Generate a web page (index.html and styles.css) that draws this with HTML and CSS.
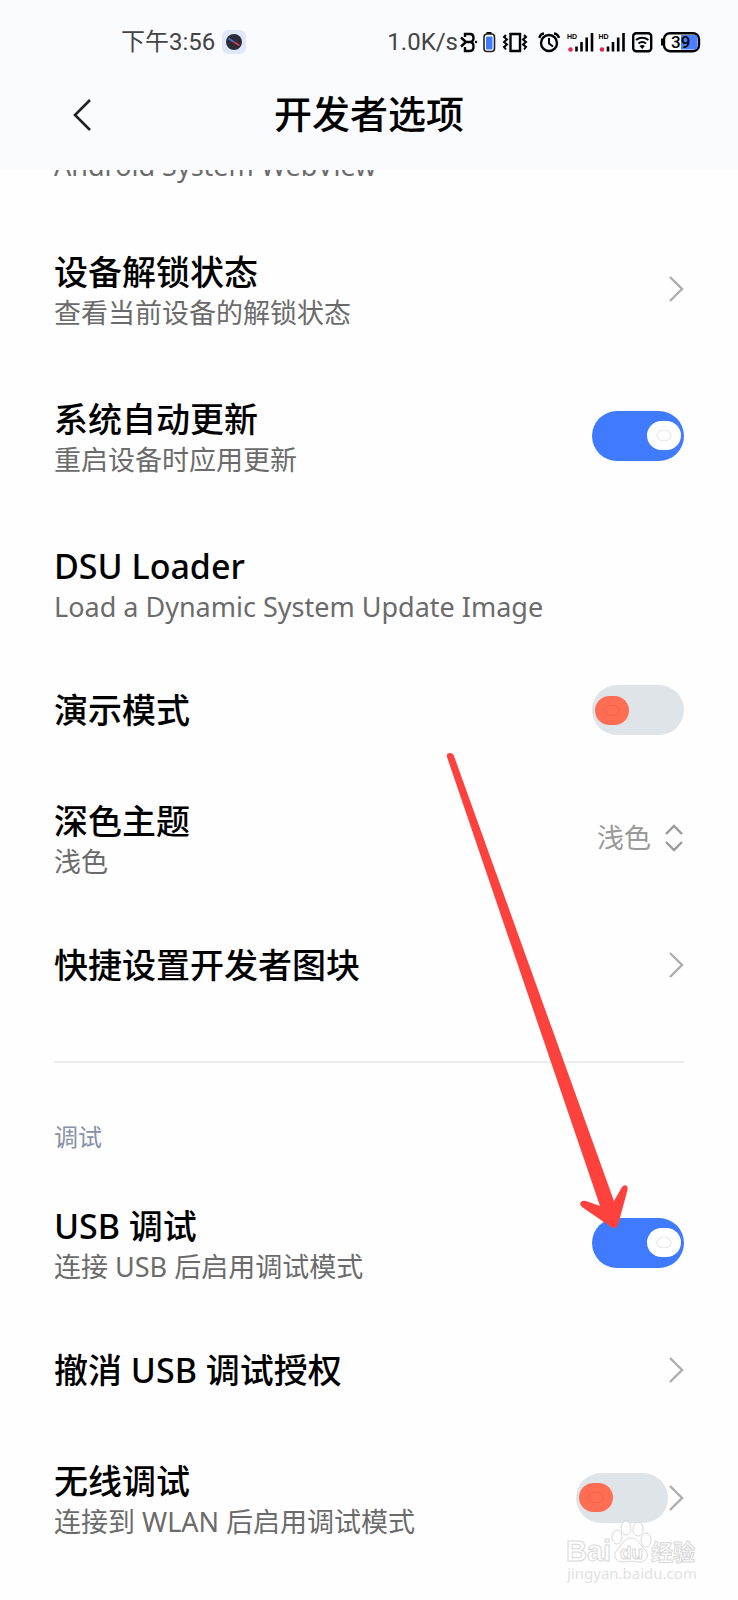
FILE: index.html
```html
<!DOCTYPE html>
<html lang="zh-CN">
<head>
<meta charset="utf-8">
<meta name="viewport" content="width=device-width, initial-scale=1">
<title>开发者选项</title>
<link rel="stylesheet" href="styles.css">
</head>
<body>
<svg class="defs" aria-hidden="true">
  <symbol id="chevron" viewBox="0 0 16 28"><path d="M2 2 14 14 2 26" fill="none" stroke="#adadad" stroke-width="2.4"/></symbol>
</svg>
<div class="screen">
  <header class="top">
    <div class="status">
      <div class="status-side">
        <span class="clock">下午3:56</span>
        <svg class="app-badge" viewBox="0 0 24 24" aria-hidden="true">
          <rect width="24" height="24" rx="6" fill="#dfe7fa"/>
          <circle cx="12" cy="12" r="8" fill="#2b2c36"/>
          <path d="M6.500 8.500 12 12" stroke="#4a6fd0" stroke-width="1.500"/>
          <path d="M12 12 17.500 15.500" stroke="#e0394f" stroke-width="1.500"/>
        </svg>
      </div>
      <div class="status-side">
        <span class="speed">1.0K/s</span>
        <svg class="status-icons" viewBox="0 0 244 24" aria-hidden="true">
          <g fill="none" stroke="#000" stroke-width="2.400">
            <path d="M3 7.500 8 12 3 16.500M7 7V4h5q3.500 0 3.500 4 0 4-3.500 4 3.500 0 3.500 4.500 0 4.500-3.500 4.500H7v-4M6 12h7"/>
            <path d="M52.500 4h9.500v17h-9.500z"/>
            <path stroke-width="2" d="M48 5l-2 2 3 2.500-3 2.500 3 2.500-3 2.500 2 2.500M66 5l2 2-3 2.500 3 2.500-3 2.500 3 2.500-2 2.500"/>
            <circle cx="91" cy="13" r="8"/>
            <path d="M91 8v5.500l4 3" stroke-width="2"/>
            <path d="M81.500 8Q82 4 86 3.500M96 3.500Q100 4 101 8"/>
            <rect x="175.200" y="3.200" width="18" height="18" rx="3"/>
          </g>
          <circle cx="18" cy="12" r="1.200" fill="#000"/>
          <path d="M28.500 2h5v2h-5z"/>
          <rect x="26" y="4" width="10.500" height="17.500" rx="3" fill="#fff" stroke="#222" stroke-width="1.600"/>
          <rect x="28" y="6.500" width="6.500" height="13" rx="1" fill="#3f7bfb"/>
          <g class="signal">
            <circle cx="112.500" cy="19.500" r="2.300" fill="#e8274f"/>
            <path d="M118.500 21.500v-5M123.500 21.500V12M128.700 21.500V7.500M134 21.500V3" stroke="#000" stroke-width="2.600"/>
            <text x="109" y="9">HD</text>
          </g>
          <g class="signal">
            <circle cx="144" cy="19.500" r="2.300" fill="#e8274f"/>
            <path d="M150 21.500v-5M155 21.500V12M160.200 21.500V7.500M165.500 21.500V3" stroke="#000" stroke-width="2.600"/>
            <text x="140.500" y="9">HD</text>
          </g>
          <path d="M178 10Q184 5.500 190.500 10M180.500 13.500Q184.200 10.500 188 13.500" fill="none" stroke="#000" stroke-width="2"/>
          <path d="M184.200 19 181.500 16q2.700-2 5.400 0z"/>
          <rect x="206" y="3.200" width="35" height="18" rx="6" fill="#fff" stroke="#000" stroke-width="2.400"/>
          <path d="M223 5h14q2.500 0 2.500 3v8.500q0 3-2.500 3H223z" fill="#4a80ff"/>
          <path d="M204.500 8.500v7" stroke="#000" stroke-width="3"/>
          <text class="level" x="213" y="18">39</text>
        </svg>
      </div>
    </div>
    <div class="bar">
      <button class="back" type="button" aria-label="返回">
        <svg viewBox="0 0 20 32" aria-hidden="true"><path d="M18 1 3 16 18 31" fill="none" stroke="#222" stroke-width="2.600"/></svg>
      </button>
      <h1 class="heading">开发者选项</h1>
    </div>
  </header>

  <main class="list">
    <div class="row row-clipped"><span class="sub">Android System WebView</span></div>

    <a class="row tall" href="#unlock">
      <span class="text"><span class="title">设备解锁状态</span><span class="sub">查看当前设备的解锁状态</span></span>
      <svg class="chevron" aria-hidden="true"><use href="#chevron"/></svg>
    </a>
    <label class="row tall">
      <span class="text"><span class="title">系统自动更新</span><span class="sub">重启设备时应用更新</span></span>
      <input class="switch" type="checkbox" checked>
    </label>
    <a class="row tall" href="#dsu">
      <span class="text"><span class="title">DSU Loader</span><span class="sub">Load a Dynamic System Update Image</span></span>
    </a>
    <label class="row">
      <span class="text"><span class="title">演示模式</span></span>
      <input class="switch" type="checkbox">
    </label>
    <div class="row tall">
      <label class="text" for="theme"><span class="title">深色主题</span><span class="sub">浅色</span></label>
      <span class="picker">
        <select class="select" id="theme"><option>浅色</option></select>
        <svg class="updown" viewBox="0 0 20 28" aria-hidden="true"><path d="M2 10 10 2 18 10M2 18 10 26 18 18" fill="none" stroke="#999" stroke-width="2.400"/></svg>
      </span>
    </div>
    <a class="row" href="#tiles">
      <span class="text"><span class="title">快捷设置开发者图块</span></span>
      <svg class="chevron" aria-hidden="true"><use href="#chevron"/></svg>
    </a>

    <section class="group">
      <h2 class="group-name">调试</h2>
      <label class="row tall">
        <span class="text"><span class="title">USB 调试</span><span class="sub">连接 USB 后启用调试模式</span></span>
        <input class="switch" type="checkbox" checked>
      </label>
      <a class="row" href="#revoke">
        <span class="text"><span class="title">撤消 USB 调试授权</span></span>
        <svg class="chevron" aria-hidden="true"><use href="#chevron"/></svg>
      </a>
      <div class="row tall">
        <label class="text" for="wireless"><span class="title">无线调试</span><span class="sub">连接到 WLAN 后启用调试模式</span></label>
        <input class="switch" id="wireless" type="checkbox">
        <svg class="chevron" aria-hidden="true"><use href="#chevron"/></svg>
      </div>
    </section>
  </main>

  <svg class="arrow" viewBox="0 0 200 490" aria-hidden="true">
    <path d="M7 12Q6 8 10 8 13 8 14 11L174 456 182 442Q184 439 187 441 188 442 187.500 445L178 480Q176 485 171 482L142 462Q139 459 141 457 143 455 146 456L160 461Z" fill="#fd423d"/>
  </svg>

  <svg class="watermark" viewBox="0 0 134 66" role="img" aria-label="Baidu 经验">
    <g fill="#fff" stroke="#d9d9d9" stroke-width="1">
      <ellipse cx="51" cy="18" rx="5" ry="7"/>
      <ellipse cx="60" cy="9" rx="5" ry="7"/>
      <ellipse cx="72" cy="10" rx="5" ry="7"/>
      <ellipse cx="80" cy="21" rx="5" ry="7"/>
      <path d="M65 19C58 19 56 26 51 31 46 36 50 44 58 43 63 42 67 42 72 43 81 44 84 36 79 31 74 26 72 19 65 19Z"/>
      <text class="wm-bai" x="0" y="42">Bai</text>
      <text class="wm-du" x="54" y="40">du</text>
      <text class="wm-cn" x="85" y="41">经验</text>
    </g>
    <text class="wm-url" x="1" y="60">jingyan.baidu.com</text>
  </svg>
</div>
</body>
</html>
```
FILE: styles.css
```css
* { box-sizing: border-box; }

body {
  margin: 0;
  background: #fefefe;
  color: #000;
  font-family: "Noto Sans", "Noto Sans CJK SC", sans-serif;
}

.defs { position: absolute; width: 0; height: 0; }

.screen {
  position: relative;
  min-height: 100vh;
  overflow: hidden;
}

.top {
  height: 170px;
  padding-top: 24px;
  background: #fafbfe;
}

.status {
  display: flex;
  justify-content: space-between;
  align-items: center;
  height: 36px;
  padding: 0 36px 0 121px;
  color: #444;
  font-family: Roboto, "Noto Sans CJK SC", sans-serif;
  font-size: 24px;
  line-height: 36px;
}

.status-side { display: flex; align-items: center; }
.app-badge { width: 24px; height: 24px; margin-left: 7px; }
.status-icons { width: 244px; height: 24px; }
.signal text { font: bold 7px "Liberation Sans", sans-serif; }
.level { font: 500 17px Roboto, sans-serif; }

.bar {
  display: grid;
  grid-template-columns: 64px 1fr 64px;
  align-items: center;
  height: 108px;
  padding: 0 50px;
}

.back {
  display: flex;
  justify-content: center;
  padding: 10px 0 8px;
  border: 0;
  background: none;
}

.back svg { width: 20px; height: 32px; }

.heading {
  margin: 0;
  padding-bottom: 2px;
  font-size: 38px;
  font-weight: 500;
  line-height: 48px;
  text-align: center;
}

.list { padding: 0 54px; }

.row {
  display: flex;
  align-items: center;
  min-height: 108px;
  color: inherit;
  text-decoration: none;
}

.row.tall { min-height: 147px; }

.row.row-clipped {
  align-items: flex-end;
  height: 45px;
  min-height: 0;
  padding-bottom: 30px;
  overflow: hidden;
}

.text { display: flex; flex: 1; flex-direction: column; }
.tall .text { padding-top: 4px; }

.title {
  font-size: 34px;
  font-weight: 500;
  line-height: 44px;
}

.sub {
  color: #6b6b6b;
  font-size: 27px;
  line-height: 38px;
}

.chevron { width: 16px; height: 28px; }

.switch {
  display: flex;
  align-items: center;
  width: 92px;
  height: 50px;
  margin: 0;
  padding: 0 3px;
  border-radius: 25px;
  background: #dfe4e8;
  appearance: none;
}

.switch::before {
  width: 34px;
  height: 29px;
  border-radius: 15px;
  background: radial-gradient(ellipse 8px 6px, #ff6d52 75%, #ee6248 90%, #ff6d52 100%);
  content: "";
}

.switch:checked { justify-content: flex-end; background: #3f7aff; }
.switch:checked::before { background: radial-gradient(ellipse 8px 6px, #fff 75%, #e2e2e2 90%, #fff 100%); }

.picker { display: flex; align-items: center; gap: 13px; }

.select {
  padding: 0;
  border: 0;
  background: none;
  color: #999;
  font: 27px/38px "Noto Sans", "Noto Sans CJK SC", sans-serif;
  appearance: none;
}

.updown { width: 20px; height: 28px; }

.group {
  margin-top: 42px;
  border-top: 2px solid #ececee;
}

.group-name {
  margin: 56px 0 14px;
  color: #8790a8;
  font-size: 24px;
  font-weight: 400;
  line-height: 36px;
}

.arrow {
  position: absolute;
  top: 745px;
  right: 98px;
  width: 200px;
  height: 490px;
  pointer-events: none;
}

.watermark {
  position: absolute;
  top: 1519px;
  right: 38px;
  width: 134px;
  height: 66px;
  pointer-events: none;
}

.wm-bai { font: bold 29px "Liberation Sans", sans-serif; }
.wm-du { font: bold 19px "Liberation Sans", sans-serif; }
.wm-cn { font: bold 22px "Noto Sans CJK SC", sans-serif; }
.wm-url { fill: #e2e2e2; font: 15px "Noto Sans", sans-serif; }
```
